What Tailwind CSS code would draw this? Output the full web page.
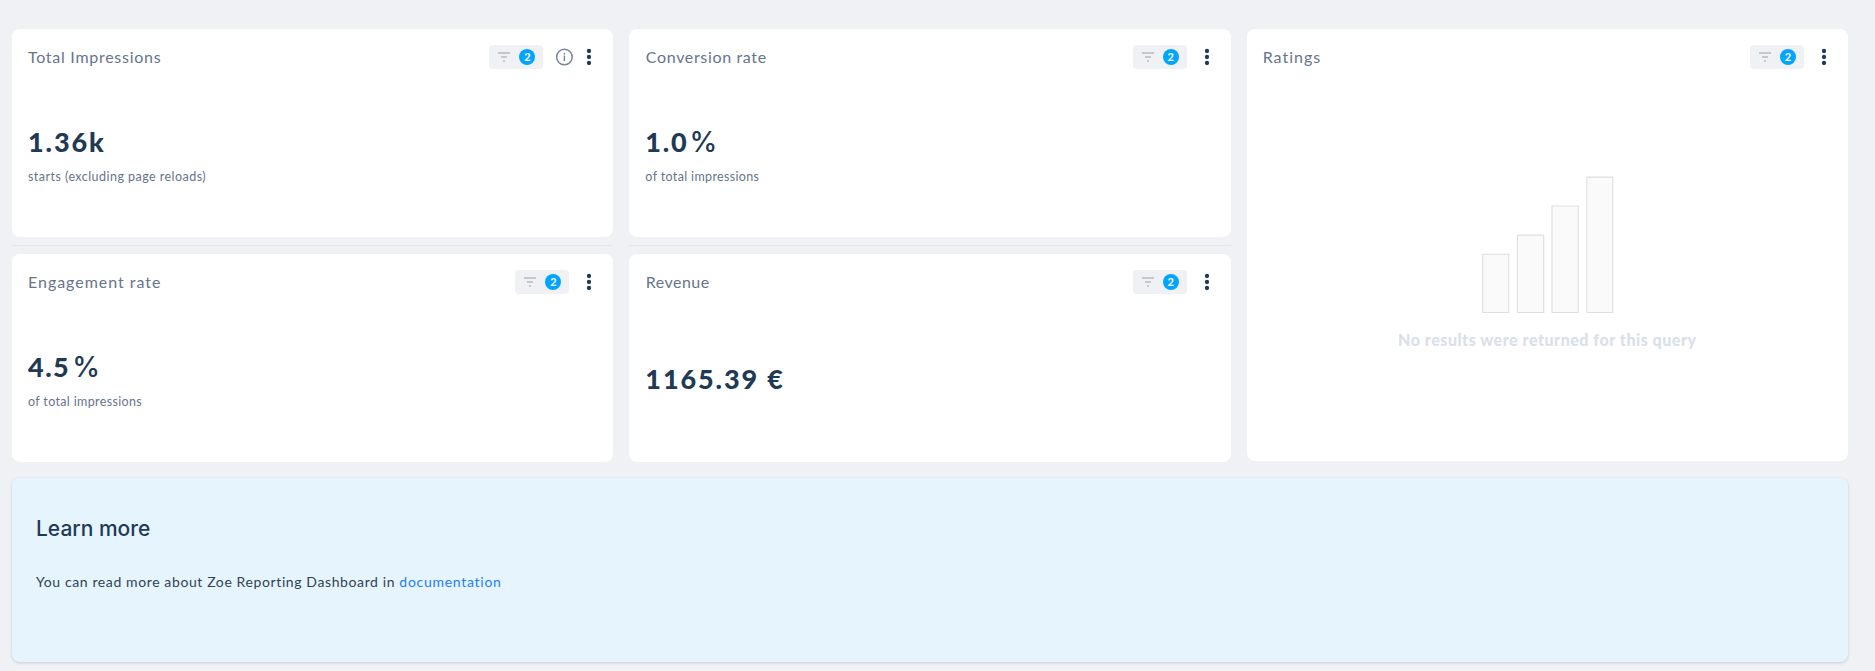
<!DOCTYPE html>
<html lang="en">
<head>
<meta charset="utf-8">
<title>Reporting Dashboard</title>
<script src="https://cdn.jsdelivr.net/npm/@tailwindcss/browser@4"></script>
</head>
<body class="h-[671px] overflow-hidden bg-[#f0f1f5] pt-[29px] pl-3 font-['Lato',sans-serif] text-[#1f3a54]">
<svg class="hidden">
  <symbol id="filter" viewBox="0 0 12 10"><path fill="#c3c7d0" d="M0 0h12v2H0zM3 4h6v2H3zM5 8h2v2H5z"/></symbol>
  <symbol id="dots" viewBox="0 0 16 24"><g fill="#1f3a54"><circle cx="8" cy="6" r="2.15"/><circle cx="8" cy="12" r="2.15"/><circle cx="8" cy="18" r="2.15"/></g></symbol>
  <symbol id="info" viewBox="0 0 18 18"><circle cx="9.4" cy="9" r="7.8" fill="none" stroke="#76859a" stroke-width="1.5"/><path d="M8.7 7.6h1.4v5.4H8.7zM8.7 5h1.4v1.5H8.7z" fill="#76859a"/></symbol>
</svg>
<main class="w-[1836px]">
  <div class="grid h-[433px] grid-cols-3 gap-x-4">
    <div class="flex flex-col">
      <section class="flex h-[208px] flex-col rounded-lg bg-white px-4 pt-4">
        <header class="mb-1 flex h-6 items-center">
          <h2 class="mr-auto text-[16px] leading-6 tracking-[0.72px] text-[#66758a]">Total Impressions</h2>
          <span class="flex h-6 w-[54px] items-center justify-between rounded bg-[#f0f1f5] pr-2 pl-[9px]"><svg class="h-[10px] w-3"><use href="#filter"/></svg><b class="size-4 rounded-full bg-[#00a5ff] text-center text-[11px] leading-[15px] text-white">2</b></span>
          <svg class="ml-3 size-[18px]"><use href="#info"/></svg>
          <svg class="ml-2 h-6 w-4"><use href="#dots"/></svg>
        </header>
        <div class="flex flex-1 flex-col justify-center">
          <div class="mb-[11px] text-[27px] leading-8 font-black tracking-[1.9px]">1.36k</div>
          <div class="text-[12.5px] leading-4 tracking-[0.46px] text-[#66758a]">starts (excluding page reloads)</div>
        </div>
      </section>
      <div class="my-2 h-px bg-[#e4e6ea]"></div>
      <section class="flex h-[208px] flex-col rounded-lg bg-white px-4 pt-4">
        <header class="mb-1 flex h-6 items-center">
          <h2 class="mr-auto text-[16px] leading-6 tracking-[0.97px] text-[#66758a]">Engagement rate</h2>
          <span class="flex h-6 w-[54px] items-center justify-between rounded bg-[#f0f1f5] pr-2 pl-[9px]"><svg class="h-[10px] w-3"><use href="#filter"/></svg><b class="size-4 rounded-full bg-[#00a5ff] text-center text-[11px] leading-[15px] text-white">2</b></span>
          <svg class="ml-3 h-6 w-4"><use href="#dots"/></svg>
        </header>
        <div class="flex flex-1 flex-col justify-center">
          <div class="mb-[11px] text-[27px] leading-8 font-black tracking-[1.5px]">4.5<span class="ml-[2px] font-['Inter'] text-[28px] leading-none font-medium tracking-normal">%</span></div>
          <div class="text-[12.5px] leading-4 tracking-[0.35px] text-[#66758a]">of total impressions</div>
        </div>
      </section>
    </div>
    <div class="flex flex-col">
      <section class="flex h-[208px] flex-col rounded-lg bg-white px-4 pt-4">
        <header class="mb-1 flex h-6 items-center">
          <h2 class="mr-auto pl-[0.5px] text-[16px] leading-6 tracking-[0.65px] text-[#66758a]">Conversion rate</h2>
          <span class="flex h-6 w-[54px] items-center justify-between rounded bg-[#f0f1f5] pr-2 pl-[9px]"><svg class="h-[10px] w-3"><use href="#filter"/></svg><b class="size-4 rounded-full bg-[#00a5ff] text-center text-[11px] leading-[15px] text-white">2</b></span>
          <svg class="ml-3 h-6 w-4"><use href="#dots"/></svg>
        </header>
        <div class="flex flex-1 flex-col justify-center">
          <div class="mb-[11px] text-[27px] leading-8 font-black tracking-[1.8px]">1.0<span class="ml-px font-['Inter'] text-[28px] leading-none font-medium tracking-normal">%</span></div>
          <div class="text-[12.5px] leading-4 tracking-[0.35px] text-[#66758a]">of total impressions</div>
        </div>
      </section>
      <div class="my-2 h-px bg-[#e4e6ea]"></div>
      <section class="flex h-[208px] flex-col rounded-lg bg-white px-4 pt-4">
        <header class="mb-1 flex h-6 items-center">
          <h2 class="mr-auto pl-[0.5px] text-[16px] leading-6 tracking-[0.45px] text-[#66758a]">Revenue</h2>
          <span class="flex h-6 w-[54px] items-center justify-between rounded bg-[#f0f1f5] pr-2 pl-[9px]"><svg class="h-[10px] w-3"><use href="#filter"/></svg><b class="size-4 rounded-full bg-[#00a5ff] text-center text-[11px] leading-[15px] text-white">2</b></span>
          <svg class="ml-3 h-6 w-4"><use href="#dots"/></svg>
        </header>
        <div class="flex flex-1 flex-col justify-center pb-[2px]">
          <div class="text-[27px] leading-8 font-black tracking-[1.9px]">1165.39 €</div>
        </div>
      </section>
    </div>
    <section class="flex h-[432px] flex-col rounded-lg bg-white px-4 pt-4">
      <header class="flex h-6 items-center">
        <h2 class="mr-auto text-[16px] leading-6 tracking-[1px] text-[#66758a]">Ratings</h2>
        <span class="flex h-6 w-[54px] items-center justify-between rounded bg-[#f0f1f5] pr-2 pl-[9px]"><svg class="h-[10px] w-3"><use href="#filter"/></svg><b class="size-4 rounded-full bg-[#00a5ff] text-center text-[11px] leading-[15px] text-white">2</b></span>
        <svg class="ml-3 h-6 w-4"><use href="#dots"/></svg>
      </header>
      <div class="flex flex-col items-center pt-[107px]">
        <svg class="ml-px h-[138px] w-[132px]" viewBox="0 0 132 138"><g fill="#fafafa" stroke="#dfdfdf" stroke-width="1.1"><path d="M.7 78.3h26v58.2h-26zM35.4 59.1h26.3v77.4H35.4zM70 30h26.3v106.5H70zM104.8 1.1h26v135.4h-26z"/></g></svg>
        <p class="mt-[14px] text-[16px] leading-6 font-black tracking-[0.53px] text-[#dae0ea]">No results were returned for this query</p>
      </div>
    </section>
  </div>
  <section class="mt-4 h-[184px] rounded-lg bg-[#e6f5fd] px-6 pt-[37px] shadow-[0_1px_3px_rgba(31,58,84,0.2)]">
    <h2 class="font-['Inter'] text-[21px] leading-7 font-medium">Learn more</h2>
    <p class="mt-[27px] text-[14px] leading-6 tracking-[0.61px] text-[#2f4254]">You can read more about Zoe Reporting Dashboard in <a class="tracking-[0.72px] text-[#1f7cff]">documentation</a></p>
  </section>
</main>
</body>
</html>
